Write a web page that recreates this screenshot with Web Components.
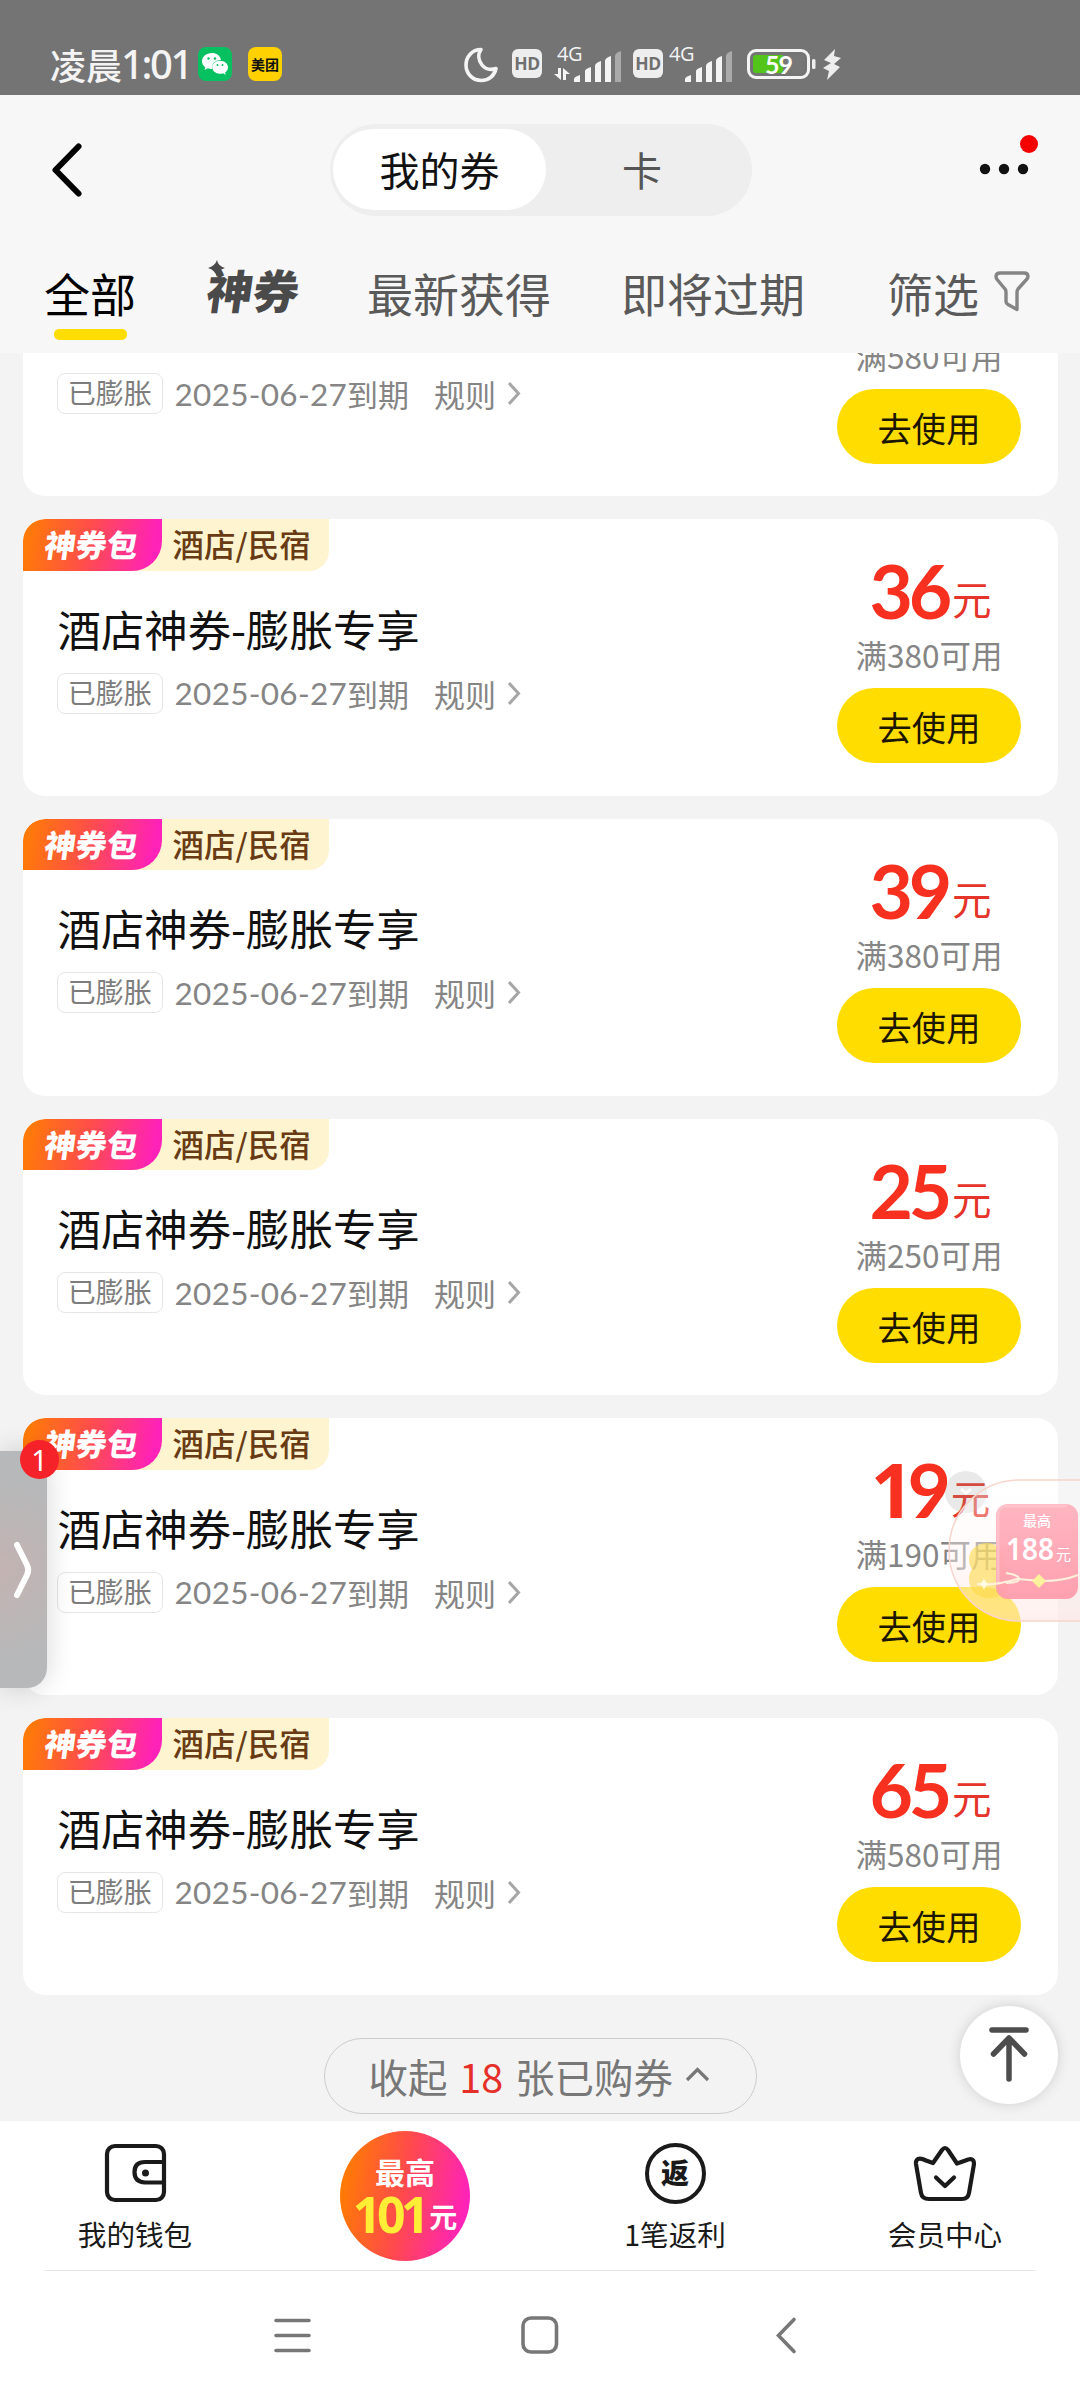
<!DOCTYPE html>
<html lang="zh-CN">
<head>
<meta charset="utf-8">
<title>我的券</title>
<style>
html,body{margin:0;padding:0;width:1080px;height:2400px;overflow:hidden;background:#f3f3f3}
body{font-family:"Noto Sans CJK SC",sans-serif;color:#111}
</style>
</head>
<body>
<coupon-page></coupon-page>
<script>
const define = (name, html) => customElements.define(name, class extends HTMLElement {
  constructor() {
    super();
    const t = document.createElement('template');
    t.innerHTML = typeof html === 'function' ? html(this) : html;
    this.attachShadow({mode: 'open'}).appendChild(t.content.cloneNode(true));
  }
});
const base = '*{box-sizing:border-box}svg{display:block;flex:none;overflow:visible}';

define('signal-bars', `<style>${base}:host{display:block}</style>
<svg width="48" height="31" viewBox="0 0 48 31" fill="#f4f4f4">
<path d="M0 31v-3q0-2 6-4v7zM11 31v-11q0-2 6-4v15zM21 31v-16q0-3 6-5v21zM31 31v-21q0-3 6-5v26z"/>
<path d="M41 31V5q0-3 6-5v31z" fill="#aaa"/></svg>`);

define('hd-badge', `<style>${base}:host{display:flex;width:30px;height:29px;border-radius:6px;background:#eee;color:#707070;align-items:center;justify-content:center;font:700 17.500px/29px "Open Sans",sans-serif;letter-spacing:-.5px}</style>HD`);

define('status-bar', `<style>${base}
:host{display:flex;height:95px;background:#747474;padding:45px 0 0 50px;color:#f4f4f4;align-items:flex-start}
.t{font-size:36px;line-height:38px;width:139px;margin-right:9px;display:flex;align-items:center;font-weight:500;white-space:nowrap}
.t b{font:500 40px/38px "Noto Sans","Noto Sans CJK SC",sans-serif;letter-spacing:-2.400px;margin-left:-1px}
.app{width:34px;height:34px;border-radius:8px;margin-top:2px;display:flex;align-items:center;justify-content:center}
.mt{background:#ffd100;color:#111;font:700 14px/34px "Noto Sans CJK SC",sans-serif;margin:2px 182px 0 16px}
.g{font:500 20px/18px "Open Sans",sans-serif;letter-spacing:-.5px}
.sig{display:grid;grid-template-columns:auto;height:36px}
.sig>*{grid-area:1/1}
.bat{width:63px;height:30px;border:3px solid #f4f4f4;border-radius:9px;padding:3px;margin:4px 0 0 14px}
.fill{height:18px;border-radius:3px;background:linear-gradient(90deg,#52c41a 58%,#777 58%);display:flex;align-items:center;justify-content:center;font:700 25px/18px Lato,sans-serif;letter-spacing:-1px;color:#fff}
</style>
<div class="t">凌晨<b>1:01</b></div>
<div class="app" style="background:#07c160"><svg width="26" height="22" viewBox="0 0 26 22"><path fill="#fff" d="M10 0C4 0 0 4 0 8.300c0 2.500 1.300 4.500 3.300 6L2.500 17l3.300-1.700q2 .7 4.200.6-.8-8.200 9-9.200C18 2.500 14.500 0 10 0z"/><path fill="#fff" d="M18 7.700c-4.700 0-7.800 3-7.800 6.500s3.300 6.500 7.800 6.500q1.800 0 3-.5l2.800 1.500-.7-2.300c1.800-1.300 2.900-3 2.900-5.200 0-3.600-3.500-6.500-8-6.500z"/><g fill="#07c160"><circle cx="6.500" cy="5.500" r="1.200"/><circle cx="13" cy="5.500" r="1.200"/><circle cx="15.500" cy="12" r="1"/><circle cx="20.500" cy="12" r="1"/></g></svg></div>
<div class="app mt">美团</div>
<svg width="34" height="36" viewBox="0 0 34 36" style="margin-top:2px"><path d="M17 2.500C8 2.500 2 10 2 18c0 9 7 15.500 15.500 15.500 7.500 0 13-5 14.500-12-5 1.500-10.500 1-14-3.500S13.500 7.500 17 2.500z" fill="none" stroke="#f4f4f4" stroke-width="3.600" stroke-linejoin="round"/></svg>
<hd-badge style="margin:4px 12px 0 14px"></hd-badge>
<div class="sig"><span class="g" style="margin-left:3px">4G</span><svg width="16" height="12" viewBox="0 0 16 12" style="margin-top:23px" fill="#f4f4f4"><path d="M4 0h3v12L0 6h4zM9 0l7 6h-4v6H9z"/></svg><signal-bars style="margin:6px 0 0 20px"></signal-bars></div>
<hd-badge style="margin:4px 6px 0 11px"></hd-badge>
<div class="sig"><span class="g">4G</span><signal-bars style="margin:6px 0 0 16px"></signal-bars></div>
<div class="bat"><div class="fill">59</div></div>
<svg width="30" height="31" viewBox="0 0 30 31" style="margin:4px 0 0 2px" fill="#eee"><rect width="3.500" height="10" y="10" rx="1.500"/><path d="M23 0 12 11l7 3-8 5 6 3-2 9 13-13-6-3 7-6-7-2z"/></svg>`);

define('top-bar', `<style>${base}
:host{display:flex;height:121px;padding:29px 42px 0 52px;align-items:flex-start}
.seg{display:flex;width:422px;height:92px;border-radius:46px;background:#eee;padding:5px 3px;font-size:40px;line-height:80px;text-align:center;margin-left:248px}
.on{width:213px;background:#fff;border-radius:41px;height:81px}
.off{flex:1;color:#555;padding-right:11px}
.more{width:54px;height:60px;margin:10px 0 0 auto}
</style>
<svg width="30" height="54" viewBox="0 0 30 54" style="margin-top:19px"><path d="M26.500 3.500 3.500 27l23 23.500" fill="none" stroke="#000" stroke-width="6" stroke-linecap="round" stroke-linejoin="round"/></svg>
<div class="seg"><div class="on">我的券</div><div class="off">卡</div></div>
<svg class="more" viewBox="0 0 54 60"><g fill="#111"><circle cx="1" cy="35" r="5.200"/><circle cx="20" cy="35" r="5.200"/><circle cx="39" cy="35" r="5.200"/></g><circle cx="45" cy="10" r="9" fill="#f50000"/></svg>`);

define('tab-strip', `<style>${base}
:host{display:flex;height:137px;padding:44px 0 0 44px;font-size:46px;line-height:64px;color:#5a5a5a;white-space:nowrap;align-items:flex-start}
.tab{margin-right:70px}
.on{color:#000;display:flex;flex-direction:column;align-items:center;margin-right:71px}
.on i{width:73px;height:11px;border-radius:5px;background:#ffdd00;margin-top:5px}
.shen{display:flex;width:92px;height:66px;line-height:58px;position:relative;font-weight:900;color:#4a4a4a;margin-right:68px}
.shen span{transform:skewX(-8deg)}
.shen svg{position:absolute;left:1px;top:0}
</style>
<div class="tab on">全部<i></i></div>
<div class="shen"><span>神券</span><svg width="17" height="17" viewBox="0 0 17 17"><path d="M9 0q1 6 8 8-7 2-8 9-2-7-9-9 7-2 9-8z" fill="#4a4a4a"/></svg></div>
<div class="tab">最新获得</div><div class="tab" style="margin-right:82px">即将过期</div><div>筛选</div>
<svg width="36" height="41" viewBox="0 0 36 41" style="margin:11px 0 0 15px"><path d="M6 2h24q4 0 4 3.500 0 1.500-1.500 3L24 18q-1 1.300-1 3v17.500l-9-5q-2-1-2-3V21q0-2-1-3L3.500 9Q2 7.500 2 5.500 2 2 6 2z" fill="none" stroke="#858585" stroke-width="3.400" stroke-linejoin="round"/></svg>`);

// A "partial" card is scrolled under the header: only its lower part has content.
define('coupon-card', el => {
  const partial = el.hasAttribute('partial');
  const digits = (el.getAttribute('amount') || '').replace('1', '<i>1</i>');
  return `<style>${base}
:host{display:flex;flex:none;height:276.600px;background:#fff;border-radius:22px;overflow:hidden;justify-content:space-between;white-space:nowrap}
.tags{display:flex;height:51.500px;width:306px;background:#fff4d0;border-radius:0 0 20px 0}
.pack{width:138.500px;background:linear-gradient(100deg,#ff7a08 5%,#ff4f48 45%,#ff22b8 92%);border-radius:22px 0 30px 0;color:#fff;font-weight:900;font-size:31px;line-height:50px;padding-left:22px}
.pack span{display:inline-block;transform:skewX(-8deg)}
.cat{font-size:31.500px;font-weight:500;line-height:49px;color:#683b14;padding-left:11px}
h3{margin:33px 0 0 34.500px;font-size:43.400px;font-weight:400;line-height:48px;height:48px;color:#111}
.meta{display:flex;margin:21px 0 0 34px;height:41px;align-items:center;color:#858585;font-size:31px;line-height:39px}
.st{width:105.500px;height:41px;border:1.500px solid #e6e6e6;border-radius:8px;font-size:28px;line-height:37px;text-align:center;margin-right:12px;color:#7d7d7d}
.d{font-family:Lato,sans-serif;font-size:31.500px;letter-spacing:.3px;line-height:38px}
.e{width:87px}
.right{width:184px;margin-right:37px;padding-top:34px;display:flex;flex-direction:column;align-items:center}
.price{height:76px;display:flex;align-items:baseline;color:#f7301f;font:700 75px/74px Lato,sans-serif;letter-spacing:-4.200px;padding-left:3px}
.price i{font:700 75px/74px "Noto Sans",sans-serif;margin-right:-2px}
.price span{font:400 39.500px/39px "Noto Sans CJK SC",sans-serif;letter-spacing:0;margin-left:4px;color:#e5352a;transform:translateY(-4px)}
.min{font-size:31.500px;line-height:51px;height:50px;color:#858585}
.btn{margin-top:9px;width:184px;height:75px;border-radius:38px;background:#ffdd00;text-align:center;font-size:34.300px;line-height:77px;color:#1c1500}
</style>
<div>${partial ? '<div class="tags"></div><h3></h3>' : `<div class="tags"><div class="pack"><span>神券包</span></div><div class="cat">酒店/民宿</div></div>
<h3>酒店神券-膨胀专享</h3>`}
<div class="meta"><div class="st">已膨胀</div><span class="d">2025-06-27</span><span class="e">到期</span><span>规则</span><svg width="14" height="25" viewBox="0 0 14 25" style="margin-left:11px"><path d="m2 2 9.500 10.500L2 23" fill="none" stroke="#a6a6a6" stroke-width="3"/></svg></div></div>
<div class="right"><div class="price">${partial ? '' : `<div>${digits}</div><span>元</span>`}</div><div class="min">满${el.getAttribute('min')}可用</div><div class="btn">去使用</div></div>`;
});

define('collapse-row', `<style>${base}
:host{display:flex;justify-content:center;margin-top:43px}
div{display:flex;align-items:center;width:433px;height:76px;border:1.500px solid #ccc;border-radius:38px;font-size:39.500px;line-height:74px;color:#777;padding-left:43.500px;white-space:pre;word-spacing:3px}
b{font-weight:400;color:#e5302a}
</style><div>收起 <b>18</b> 张已购券<svg width="25" height="15" viewBox="0 0 25 15" style="margin:0 0 2px 12px"><path d="M2 13 12.500 2.500 23 13" fill="none" stroke="#777" stroke-width="3.200"/></svg></div>`);

define('coupon-list', `<style>${base}
:host{display:flex;flex-direction:column;height:1768px;overflow:hidden;padding:0 22px 0 23px;background:#f3f3f3}
.stack{display:flex;flex-direction:column;gap:23.100px;margin-top:-133.400px}
</style><div class="stack"><slot></slot></div><collapse-row></collapse-row>`);

define('dock-item', `<style>${base}
:host{display:flex;flex-direction:column;align-items:center;width:270px;font-size:28.600px;line-height:40px;color:#1a1a1a;padding-top:21px}
.i{height:62px;display:flex;align-items:center;margin-bottom:10px}
</style><div class="i"><slot name="icon"></slot></div><slot></slot>`);

define('bottom-dock', `<style>${base}
:host{display:flex;height:149px;background:#fff}
.hot{width:270px;display:flex;justify-content:center;padding-top:10px}
.ball{width:130px;height:130px;border-radius:50%;background:linear-gradient(100deg,#ff7a05 8%,#ff4a4c 48%,#ff22bb 92%);color:#fff;font-weight:700;display:flex;flex-direction:column;align-items:center;padding-top:22px}
.ball .a{font-size:30px;line-height:36px}
.ball .b{display:flex;align-items:baseline;font:700 50px/50px "Noto Sans",sans-serif;color:#ffee35;letter-spacing:-4.500px}
.ball .b span{font:700 28px/30px "Noto Sans CJK SC",sans-serif;color:#fff;letter-spacing:0;margin-left:4px;transform:translateY(-5px)}
.fan{width:61px;height:61px;border:4.500px solid #1a1a1a;border-radius:50%;text-align:center;font-size:28px;line-height:50px;font-weight:900}
</style>
<dock-item><svg slot="icon" width="61" height="58" viewBox="0 0 61 58" fill="none" stroke="#1a1a1a" stroke-width="4.200"><rect x="2" y="2" width="57" height="54" rx="8"/><path d="M59 18H40q-10.500 0-10.500 10T40 38.500h19"/><circle cx="40.500" cy="29" r="3.500" fill="#1a1a1a" stroke="none"/></svg>我的钱包</dock-item>
<div class="hot"><div class="ball"><div class="a">最高</div><div class="b">101<span>元</span></div></div></div>
<dock-item><div slot="icon" class="fan">返</div>1笔返利</dock-item>
<dock-item><svg slot="icon" width="62" height="55" viewBox="0 0 62 55" fill="none" stroke="#1a1a1a" stroke-width="4.200" stroke-linejoin="round" stroke-linecap="round"><path d="M4 13q3-1 8 1.500l7 2.500L28 4q3-4 6 0l9 13.500 8.500-3Q60 10.500 60 18l-5 29q-1 6-7 6H15q-7 0-8-6L2 18q-.5-3.500 2-5z"/><path d="m22 31.500 9 8.500 9-8.500"/></svg>会员中心</dock-item>`);

define('system-nav', `<style>${base}
:host{display:block;height:130px;background:#fff;padding:0 45px}
div{border-top:1.500px solid #e4e4e4;display:flex;padding-top:45px}
</style><div>
<svg width="37" height="37" viewBox="0 0 37 37" style="margin-left:229px" stroke="#777" stroke-width="3.600" stroke-linecap="round"><path d="M2 4.500h33M2 19.500h33M2 34.500h33"/></svg>
<svg width="37" height="38" viewBox="0 0 37 38" style="margin-left:210px"><rect x="2" y="2" width="33.500" height="34" rx="8" fill="none" stroke="#777" stroke-width="3.600"/></svg>
<svg width="20" height="38" viewBox="0 0 20 38" style="margin-left:218px"><path d="M18 3.500 2.500 19.500 18 35.500" fill="none" stroke="#777" stroke-width="3.600" stroke-linecap="round"/></svg>
</div>`);

define('side-handle', `<style>${base}
:host{position:absolute;left:0;top:1451px;width:47px;height:237px;border-radius:0 18px 20px 0;background:radial-gradient(circle at 0 50%,#c2b3b1,#b6b8ba 75%);box-shadow:0 0 28px rgba(0,0,0,.16);display:flex;align-items:center;padding:0 0 0 13px}
b{position:absolute;left:20px;top:-11px;width:39px;height:39px;border-radius:50%;background:#f5222a;color:#fff;font:400 29px/39px "Noto Sans",sans-serif;text-align:center}
</style><svg width="20" height="56" viewBox="0 0 20 56"><path d="m4 3 10 20q2.500 5 0 10L4 53" fill="none" stroke="#fff" stroke-width="6" stroke-linecap="round"/></svg><b>1</b>`);

define('bonus-float', `<style>${base}
:host{position:absolute;left:940px;top:1465px;width:140px;height:165px;overflow:hidden}
svg text{font-family:"Noto Sans CJK SC",sans-serif;fill:#fff}
</style><svg width="140" height="165" viewBox="0 0 140 165">
<defs><linearGradient id="p" x2="0" y2="1"><stop offset="0" stop-color="#ffb2bd"/><stop offset="1" stop-color="#ff9cac"/></linearGradient><linearGradient id="c" x2="0" y2="1"><stop offset="0" stop-color="#fff" stop-opacity=".25"/><stop offset="1" stop-color="#ffe6e3" stop-opacity=".6"/></linearGradient></defs>
<circle cx="26" cy="27" r="21" fill="#999" opacity=".22"/><path d="m21 24 5 4 5-4" stroke="#fff" stroke-width="3" fill="none" opacity=".8"/>
<rect x="9" y="15" width="200" height="141" rx="70.500" fill="url(#c)" stroke="#f9d5cc" stroke-width="1.500"/>
<path d="M47 78c10 0 17 7 17 16l-1 6q7 5 7 13c0 12-9 20-21 20s-20-8-20-19q0-6 3-10-3-4-3-10c0-9 8-16 18-16z" fill="#fcd84a" opacity=".6"/>
<rect x="56" y="39" width="82" height="95" rx="12" fill="url(#p)" opacity=".95"/>
<path d="M58 120V50q0-9 9-9h60" fill="none" stroke="#ffccd4" stroke-width="3" opacity=".6"/>
<path d="M37 119q18 2 40-5l26 2q20 0 35-6M66 108q13 2 13 6t-13 4" fill="none" stroke="#fff0dc" stroke-width="2"/>
<path d="m99 109 7 7-7 7-7-7z" fill="#fff09b"/><path d="M44 113q1 5 6 6-5 1-6 6-1-5-6-6 5-1 6-6z" fill="#fffbe0"/>
<text x="83" y="61" font-size="14" font-weight="500">最高</text><text x="66" y="95" font-size="30" font-weight="600" textLength="48" lengthAdjust="spacingAndGlyphs" style="font-family:'Noto Sans'">188</text><text x="116" y="95" font-size="15">元</text></svg>`);

define('to-top', `<style>${base}
:host{position:absolute;left:960px;top:2006px;width:98px;height:98px;border-radius:50%;background:#fff;box-shadow:0 0 14px rgba(0,0,0,.15);display:flex;justify-content:center;padding-top:20px}
</style><svg width="40" height="58" viewBox="0 0 40 58" fill="none" stroke="#4d4d4d" stroke-width="5.500" stroke-linecap="round" stroke-linejoin="round"><path d="M3 4h34M20 13v40M4.500 28 20 12l15.500 16"/></svg>`);

define('coupon-page', `<style>${base}
:host{display:flex;flex-direction:column;width:1080px;height:2400px;position:relative;overflow:hidden;background:#f7f7f7}
</style>
<status-bar></status-bar><top-bar></top-bar><tab-strip></tab-strip>
<coupon-list>
<coupon-card partial min="580"></coupon-card>
<coupon-card amount="36" min="380"></coupon-card>
<coupon-card amount="39" min="380"></coupon-card>
<coupon-card amount="25" min="250"></coupon-card>
<coupon-card amount="19" min="190"></coupon-card>
<coupon-card amount="65" min="580"></coupon-card>
</coupon-list>
<bottom-dock></bottom-dock><system-nav></system-nav>
<side-handle></side-handle><bonus-float></bonus-float><to-top></to-top>`);
</script>
</body>
</html>
